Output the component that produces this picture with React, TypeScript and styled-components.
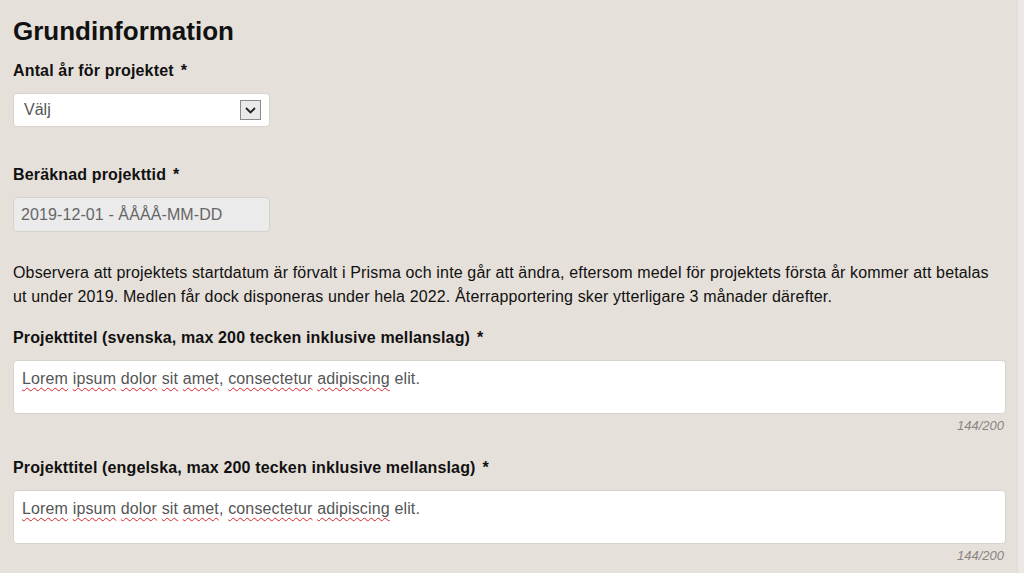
import styled, { createGlobalStyle } from 'styled-components';

const GlobalStyle = createGlobalStyle`
  html, body {
    margin: 0;
    padding: 0;
    background: #e6e0da;
  }
  body {
    font-family: "Liberation Sans", Arial, sans-serif;
    color: #111;
  }
`;

const Page = styled.div`
  display: flex;
  width: 1024px;
  height: 573px;
  overflow: hidden;
`;

const Main = styled.div`
  flex: 1;
  padding: 16px 11px 0 13px;
  background: #e6e0da;
`;

const Edge = styled.div`
  width: 6px;
  background: #ece8e5;
  border-left: 1px solid #e2ddd4;
`;

const Title = styled.h1`
  margin: 0 0 15px;
  font-size: 26px;
  font-weight: bold;
  line-height: 30px;
`;

const Field = styled.div<{ $gap?: number }>`
  display: flex;
  flex-direction: column;
  margin-bottom: ${p => p.$gap ?? 0}px;
`;

const Label = styled.label`
  font-size: 16px;
  font-weight: bold;
  letter-spacing: 0.15px;
  line-height: 20px;
  margin-bottom: 12px;

  span {
    margin-left: 7px;
  }
`;

const Select = styled.div`
  box-sizing: border-box;
  width: 257px;
  height: 34px;
  display: flex;
  align-items: center;
  justify-content: space-between;
  padding: 0 8px 0 10px;
  background: #fff;
  border: 1px solid #d8d3cc;
  border-radius: 4px;
  font-size: 16px;
  color: #555;
`;

const Arrow = styled.div`
  box-sizing: border-box;
  width: 21px;
  height: 20px;
  display: flex;
  align-items: center;
  justify-content: center;
  background: #e9e9e9;
  border: 1px solid #8a8a8a;
`;

const DateInput = styled.div`
  box-sizing: border-box;
  width: 257px;
  height: 35px;
  display: flex;
  align-items: center;
  padding: 0 7px;
  background: #ebebeb;
  border: 1px solid #d6d1cb;
  border-radius: 4px;
  font-size: 16px;
  letter-spacing: 0.1px;
  color: #666;
`;

const Note = styled.p`
  margin: 0 0 19px;
  font-size: 16px;
  letter-spacing: 0.15px;
  line-height: 24px;
  color: #111;
`;

const TextArea = styled.div`
  box-sizing: border-box;
  height: 54px;
  padding: 8px 8px;
  background: #fff;
  border: 1px solid #d8d3cc;
  border-radius: 4px;
  font-size: 16px;
  letter-spacing: 0.15px;
  line-height: 20px;
  color: #555;
`;

const Misspelled = styled.span`
  text-decoration: underline wavy #e0202a;
  text-decoration-thickness: 1px;
  text-underline-offset: 3px;
`;

const Counter = styled.div`
  align-self: flex-end;
  margin: 4px 2px 0 0;
  font-size: 13px;
  font-style: italic;
  color: #8a8580;
  line-height: 16px;
`;

const words = ['Lorem', 'ipsum', 'dolor', 'sit', 'amet,', 'consectetur', 'adipiscing'];

function LoremText() {
  return (
    <TextArea>
      {words.map((w, i) => {
        const core = w.replace(',', '');
        return (
          <span key={i}>
            <Misspelled>{core}</Misspelled>
            {w.endsWith(',') ? ',' : ''}{' '}
          </span>
        );
      })}
      elit.
    </TextArea>
  );
}

export default function App() {
  return (
    <Page>
      <GlobalStyle />
      <Main>
        <Title>Grundinformation</Title>
        <Field $gap={38}>
          <Label>Antal år för projektet<span>*</span></Label>
          <Select>
            Välj
            <Arrow>
              <svg width="11" height="7" viewBox="0 0 11 7">
                <path d="M1 1 L5.5 5.5 L10 1" fill="none" stroke="#222" strokeWidth="1.8" />
              </svg>
            </Arrow>
          </Select>
        </Field>
        <Field $gap={29}>
          <Label>Beräknad projekttid<span>*</span></Label>
          <DateInput>2019-12-01 - ÅÅÅÅ-MM-DD</DateInput>
        </Field>
        <Note>
          Observera att projektets startdatum är förvalt i Prisma och inte går att ändra, eftersom medel för projektets första år kommer att betalas ut under 2019. Medlen får dock disponeras under hela 2022. Återrapportering sker ytterligare 3 månader därefter.
        </Note>
        <Field $gap={24}>
          <Label>Projekttitel (svenska, max 200 tecken inklusive mellanslag)<span>*</span></Label>
          <LoremText />
          <Counter>144/200</Counter>
        </Field>
        <Field>
          <Label>Projekttitel (engelska, max 200 tecken inklusive mellanslag)<span>*</span></Label>
          <LoremText />
          <Counter>144/200</Counter>
        </Field>
      </Main>
      <Edge />
    </Page>
  );
}
